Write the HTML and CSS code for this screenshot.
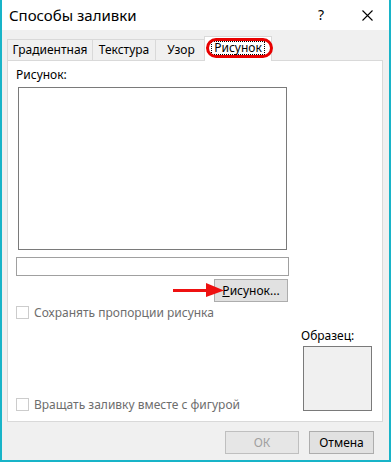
FILE: index.html
```html
<!DOCTYPE html>
<html>
<head>
    <meta charset="UTF-8">
    <title>Способы заливки</title>
    <link rel="stylesheet" href="styles.css">
</head>
<body>
    <!-- Dialog window -->
    <div class="window">
        <div class="titlebar">
            <span class="title">Способы заливки</span>
            <span class="help">?</span>
            <svg class="close" width="11" height="11" viewBox="0 0 11 11">
                <path d="M0.5 0.5 L10.5 10.5 M10.5 0.5 L0.5 10.5" stroke="#000" stroke-width="1.1" fill="none"/>
            </svg>
        </div>

        <div class="content">
            <!-- Tabs -->
            <div class="tabs">
                <div class="tab tab-grad">Градиентная</div>
                <div class="tab tab-tex">Текстура</div>
                <div class="tab tab-pat">Узор</div>
                <div class="tab tab-pic active">
                    <span class="focus">Рисунок</span>
                    <span class="mark"></span>
                </div>
            </div>

            <!-- Tab page -->
            <div class="panel">
                <div class="label">Рисунок:</div>
                <div class="picture"></div>
                <div class="field"></div>
                <div class="btn-row">
                    <svg class="arrow" width="52" height="16" viewBox="0 0 52 16">
                        <rect x="0" y="7" width="36" height="3" fill="#ee1111"/>
                        <polygon points="33,1 51,8.5 33,15" fill="#ee1111"/>
                    </svg>
                    <div class="btn btn-pic"><u>Р</u>исунок...</div>
                </div>
                <div class="bottom">
                    <div class="checks">
                        <label class="check"><span class="box"></span>Сохранять пропорции рисунка</label>
                        <label class="check check-last"><span class="box"></span>Вращать заливку вместе с фигурой</label>
                    </div>
                    <div class="sample">
                        <div class="sample-label">Образец:</div>
                        <div class="sample-box"></div>
                    </div>
                </div>
            </div>

            <!-- Dialog buttons -->
            <div class="actions">
                <div class="btn btn-ok disabled">ОК</div>
                <div class="btn btn-cancel">Отмена</div>
            </div>
        </div>
    </div>
</body>
</html>
```

FILE: styles.css
```css
* {
    box-sizing: border-box;
}
body {
    margin: 0;
    font-family: "Noto Sans", "Open Sans", sans-serif;
    font-size: 12px;
    color: #000;
}
.window {
    width: 391px;
    height: 462px;
    border: 2px solid #18b4c8;
    border-top: none;
    background-color: #f0f0f0;
}
.titlebar {
    height: 30px;
    background-color: #fff;
    display: flex;
    align-items: center;
    padding-left: 7px;
}
.title {
    font-size: 15px;
    flex: 1;
    margin-top: -1px;
}
.help {
    font-size: 14px;
    margin-right: 38px;
    margin-top: -1px;
}
.close {
    margin-right: 16px;
}
.content {
    height: 430px;
    padding: 6px 0 0 5px;
}
.tabs {
    display: flex;
    align-items: flex-end;
    height: 24px;
}
.tab {
    height: 21px;
    border: 1px solid #d9d9d9;
    border-bottom: none;
    margin-right: -1px;
    display: flex;
    align-items: center;
    justify-content: center;
    padding-bottom: 1px;
}
.tab-grad {
    width: 86px;
}
.tab-tex {
    width: 64px;
}
.tab-pat {
    width: 52px;
}
.tab.active {
    position: relative;
    z-index: 1;
    width: 68px;
    height: 25px;
    margin-left: -2px;
    margin-bottom: -1px;
    background-color: #fff;
    padding-bottom: 3px;
}
.focus {
    border: 1px dotted #000;
    padding: 0 2px;
    line-height: 12px;
}
.mark {
    position: absolute;
    left: 1px;
    top: 1px;
    width: 67px;
    height: 20px;
    border: 3px solid #e80000;
    border-radius: 10px;
}
.panel {
    width: 376px;
    height: 362px;
    background-color: #fff;
    border: 1px solid #d9d9d9;
    padding: 5px 10px 10px 8px;
    display: flex;
    flex-direction: column;
}
.label {
    line-height: 18px;
}
.picture {
    width: 269px;
    height: 163px;
    margin: 3px 0 0 2px;
    border: 1px solid #7a7a7a;
}
.field {
    width: 273px;
    height: 19px;
    margin-top: 7px;
    border: 1px solid #a0a0a0;
}
.btn-row {
    position: relative;
    width: 272px;
    margin-top: 3px;
    display: flex;
    justify-content: flex-end;
}
.arrow {
    position: absolute;
    left: 157px;
    top: 3px;
}
.btn {
    height: 23px;
    background-color: #e1e1e1;
    border: 1px solid #adadad;
    display: flex;
    align-items: center;
    justify-content: center;
}
.btn-pic {
    width: 74px;
}
.btn-pic u {
    text-decoration-thickness: 1px;
}
.bottom {
    flex: 1;
    display: flex;
}
.checks {
    flex: 1;
    display: flex;
    flex-direction: column;
}
.check {
    display: flex;
    align-items: center;
    height: 13px;
    margin-top: 4px;
    color: #6d6d6d;
}
.check-last {
    margin-top: auto;
}
.box {
    width: 13px;
    height: 13px;
    border: 1px solid #cccccc;
    margin-right: 5px;
}
.sample {
    display: flex;
    flex-direction: column;
    padding-top: 25px;
}
.sample-label {
    line-height: 18px;
}
.sample-box {
    width: 69px;
    height: 65px;
    margin-left: 2px;
    margin-top: 1px;
    border: 1px solid #7a7a7a;
    background-color: #f0f0f0;
}
.actions {
    display: flex;
    justify-content: flex-end;
    gap: 10px;
    margin-top: 9px;
    padding-right: 15px;
}
.btn-ok {
    width: 74px;
}
.btn-ok.disabled {
    color: #a0a0a0;
    border-color: #bfbfbf;
    background-color: #e6e6e6;
}
.btn-cancel {
    width: 65px;
}
```
